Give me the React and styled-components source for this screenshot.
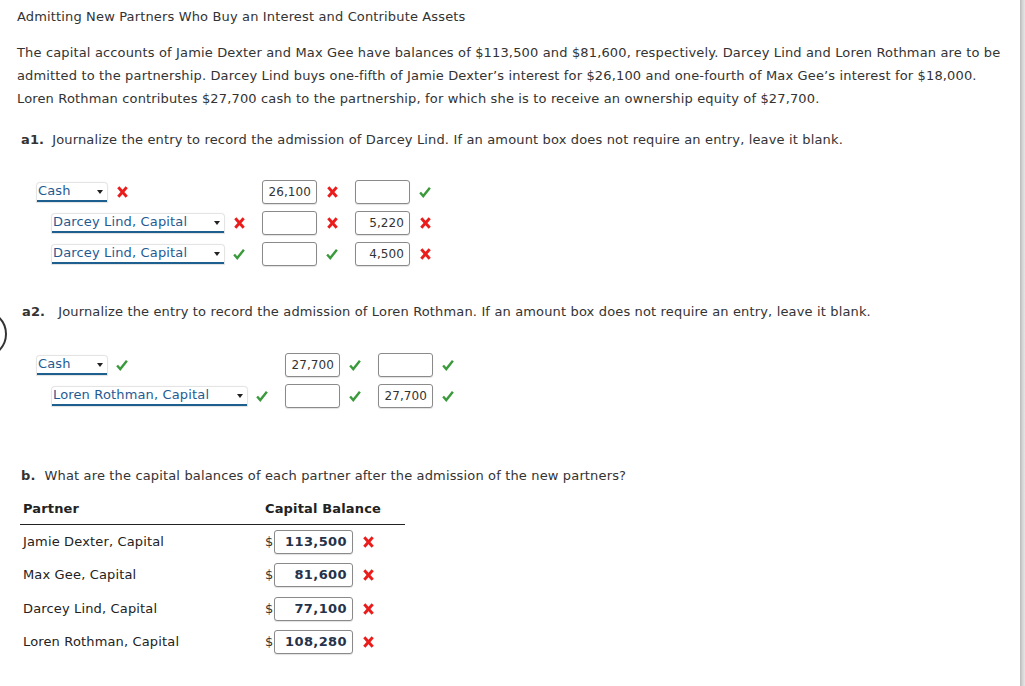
import React from "react";
import styled, { createGlobalStyle } from "styled-components";

const Global = createGlobalStyle`
  html, body { margin: 0; padding: 0; background: #fff; }
  body {
    font-family: Verdana, "DejaVu Sans", sans-serif;
    font-size: 13px;
    letter-spacing: 0.15px;
    color: #333;
  }
`;

const Page = styled.div`
  display: flex;
  min-height: 686px;
  position: relative;
  overflow: hidden;
`;

const Main = styled.div`
  flex: 1;
  padding: 8px 17px;
`;

const Edge = styled.div`
  width: 5px;
  background: linear-gradient(to right, #b9b9b9, #d4d4d4 50%, #e6e6e6);
`;

const Title = styled.h1`
  margin: 0;
  font-size: 13px;
  font-weight: normal;
  line-height: 18px;
  color: #333;
`;

const Para = styled.p`
  margin: 14.5px 0 0;
  line-height: 23px;
  color: #333;
`;

const Question = styled.p`
  margin: ${(p) => p.$top}px 0 0;
  padding-left: ${(p) => p.$indent || 4}px;
  line-height: 23px;
  color: #333;
`;

const Label = styled.b`
  font-weight: bold;
  margin-right: ${(p) => p.$gap}px;
`;

const Journal = styled.div`
  display: grid;
  grid-template-columns: auto auto auto;
  justify-content: start;
  column-gap: 17px;
  row-gap: 7px;
  margin: ${(p) => p.$top}px 0 0 20px;
`;

const Cell = styled.div`
  display: flex;
  align-items: center;
  gap: 9px;
  height: 24px;
  padding-left: ${(p) => p.$indent || 0}px;
`;

const Select = styled.div`
  position: relative;
  box-sizing: border-box;
  width: ${(p) => p.$w}px;
  height: 19px;
  padding: 0 0 0 1px;
  line-height: 16px;
  color: #1f5b93;
  background: #fff;
  border-radius: 3px 3px 0 0;
  box-shadow: 0 0 1px 1px #e2e2e2;
  border-bottom: 2px solid #1d5f8f;
  white-space: nowrap;
  &::after {
    content: "";
    position: absolute;
    right: 4px;
    top: 7px;
    border-left: 3.5px solid transparent;
    border-right: 3.5px solid transparent;
    border-top: 4px solid #222;
  }
`;

const Amount = styled.div`
  box-sizing: border-box;
  width: ${(p) => p.$w || 55}px;
  height: 24px;
  padding: 0 5px;
  border: 1px solid #8a8a8a;
  border-radius: 3px;
  background: #fff;
  box-shadow: 0 1px 1px rgba(0, 0, 0, 0.12);
  text-align: right;
  line-height: 22px;
  font-size: ${(p) => (p.$bold ? 13 : 12)}px;
  font-weight: ${(p) => (p.$bold ? "bold" : "normal")};
  color: ${(p) => (p.$bold ? "#25324a" : "#333")};
  letter-spacing: ${(p) => (p.$bold ? "0.4px" : "0.1px")};
`;

const MarkBox = styled.span`
  display: inline-flex;
  width: 12px;
  height: 12px;
  align-items: center;
  justify-content: center;
`;

const Circle = styled.div`
  position: absolute;
  left: -41px;
  top: 310px;
  width: 44px;
  height: 44px;
  border: 2px solid #333;
  border-radius: 50%;
`;

const Check = () => (
  <MarkBox>
    <svg width="13" height="12" viewBox="0 0 13 12">
      <path d="M1.2 6.6 L4.6 10.4 L11.8 1.4" fill="none" stroke="#3b9a3b" strokeWidth="2.6" strokeLinejoin="miter" />
    </svg>
  </MarkBox>
);

const Cross = () => (
  <MarkBox>
    <svg width="11" height="12" viewBox="0 0 11 12">
      <path d="M1.3 1.3 L9.7 10.7 M9.7 1.3 L1.3 10.7" fill="none" stroke="#ea1c1c" strokeWidth="2.9" />
    </svg>
  </MarkBox>
);

const Mark = ({ ok }) => (ok ? <Check /> : <Cross />);

const Balances = styled.table`
  border-collapse: collapse;
  width: 385px;
  margin: 11px 0 0 3px;
  color: #222;
`;

const Th = styled.th`
  text-align: left;
  font-weight: bold;
  padding: 2px 3px 6px;
  line-height: 18px;
  border-bottom: 1px solid #222;
  width: ${(p) => p.$w || "auto"};
`;

const Td = styled.td`
  padding: 5px 3px 4.5px;
  line-height: 24px;
  vertical-align: middle;
`;

const BalanceCell = styled.div`
  display: flex;
  align-items: center;
`;

const Dollar = styled.span`
  width: 9px;
  color: #333;
`;

const BalanceMark = styled.span`
  margin-left: 9px;
  display: inline-flex;
`;

const a1 = [
  { acct: "Cash", w: 70, indent: 0, ok: false, dr: "26,100", drOk: false, cr: "", crOk: true },
  { acct: "Darcey Lind, Capital", w: 172, indent: 15, ok: false, dr: "", drOk: false, cr: "5,220", crOk: false },
  { acct: "Darcey Lind, Capital", w: 172, indent: 15, ok: true, dr: "", drOk: true, cr: "4,500", crOk: false },
];

const a2 = [
  { acct: "Cash", w: 70, indent: 0, ok: true, dr: "27,700", drOk: true, cr: "", crOk: true },
  { acct: "Loren Rothman, Capital", w: 195, indent: 15, ok: true, dr: "", drOk: true, cr: "27,700", crOk: true },
];

const balances = [
  ["Jamie Dexter, Capital", "113,500"],
  ["Max Gee, Capital", "81,600"],
  ["Darcey Lind, Capital", "77,100"],
  ["Loren Rothman, Capital", "108,280"],
];

const JournalRows = ({ rows, top }) => (
  <Journal $top={top}>
    {rows.map((r, i) => (
      <React.Fragment key={i}>
        <Cell $indent={r.indent}>
          <Select $w={r.w}>{r.acct}</Select>
          <Mark ok={r.ok} />
        </Cell>
        <Cell>
          <Amount>{r.dr}</Amount>
          <Mark ok={r.drOk} />
        </Cell>
        <Cell>
          <Amount>{r.cr}</Amount>
          <Mark ok={r.crOk} />
        </Cell>
      </React.Fragment>
    ))}
  </Journal>
);

export default function App() {
  return (
    <>
      <Global />
      <Page>
        <Circle />
        <Main>
          <Title>Admitting New Partners Who Buy an Interest and Contribute Assets</Title>
          <Para>
            The capital accounts of Jamie Dexter and Max Gee have balances of $113,500 and $81,600, respectively. Darcey Lind and Loren Rothman are to be admitted to the partnership. Darcey Lind buys one-fifth of Jamie Dexter’s interest for $26,100 and one-fourth of Max Gee’s interest for $18,000. Loren Rothman contributes $27,700 cash to the partnership, for which she is to receive an ownership equity of $27,700.
          </Para>
          <Question $top={18}>
            <Label $gap={8}>a1.</Label>Journalize the entry to record the admission of Darcey Lind. If an amount box does not require an entry, leave it blank.
          </Question>
          <JournalRows rows={a1} top={29.5} />
          <Question $top={33.5} $indent={5}>
            <Label $gap={13}>a2.</Label>Journalize the entry to record the admission of Loren Rothman. If an amount box does not require an entry, leave it blank.
          </Question>
          <JournalRows rows={a2} top={30.5} />
          <Question $top={55.5}>
            <Label $gap={9}>b.</Label>What are the capital balances of each partner after the admission of the new partners?
          </Question>
          <Balances>
            <thead>
              <tr>
                <Th $w="236px">Partner</Th>
                <Th>Capital Balance</Th>
              </tr>
            </thead>
            <tbody>
              {balances.map(([name, val]) => (
                <tr key={name}>
                  <Td>{name}</Td>
                  <Td>
                    <BalanceCell>
                      <Dollar>$</Dollar>
                      <Amount $w={79} $bold>{val}</Amount>
                      <BalanceMark>
                        <Cross />
                      </BalanceMark>
                    </BalanceCell>
                  </Td>
                </tr>
              ))}
            </tbody>
          </Balances>
        </Main>
        <Edge />
      </Page>
    </>
  );
}
